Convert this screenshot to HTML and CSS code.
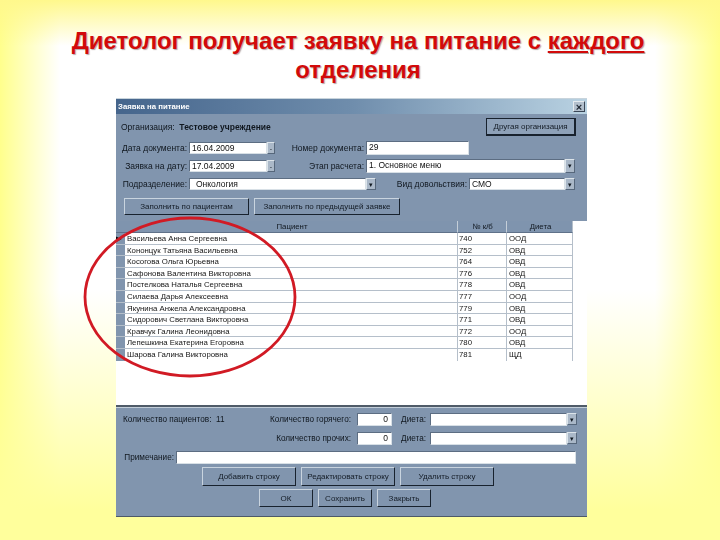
FILE: index.html
```html
<!DOCTYPE html>
<html lang="ru">

<head>
    <meta charset="UTF-8">
    <title>Заявка на питание</title>
    <link rel="stylesheet" href="styles.css">
</head>

<body>
    <h1 class="slideTitle">Диетолог получает заявку на питание с <u>каждого</u><br>отделения</h1>

    <section class="window">
        <div class="titleBar">
            <span>Заявка на питание</span>
            <span class="closeBtn">×</span>
        </div>

        <div class="formTop">
            <div class="orgRow">
                <span class="orgText">Организация: &nbsp;<b>Тестовое учреждение</b></span>
                <button class="btn btnOrg">Другая организация</button>
            </div>

            <div class="formRow rowDate1">
                <label class="lblLeft">Дата документа:</label>
                <span class="field fieldDate">16.04.2009</span><span class="spin">-</span>
                <label class="lblMid">Номер документа:</label>
                <span class="field fieldNum">29</span>
            </div>

            <div class="formRow rowDate2">
                <label class="lblLeft">Заявка на дату:</label>
                <span class="field fieldDate">17.04.2009</span><span class="spin">-</span>
                <label class="lblMid">Этап расчета:</label>
                <span class="field fieldStage">1. Основное меню</span><span class="arrow">▾</span>
            </div>

            <div class="formRow rowDept">
                <label class="lblLeft">Подразделение:</label>
                <span class="field fieldDept">Онкология</span><span class="arrow">▾</span>
                <label class="lblKind">Вид довольствия:</label>
                <span class="field fieldKind">СМО</span><span class="arrow">▾</span>
            </div>

            <div class="fillRow">
                <button class="btn btnFill1">Заполнить по пациентам</button>
                <button class="btn btnFill2">Заполнить по предыдущей заявке</button>
            </div>
        </div>

        <div class="gridBox">
            <div class="gridRow gridHead">
                <span class="rowMark"></span>
                <span class="colName">Пациент</span>
                <span class="colNum">№ к/б</span>
                <span class="colDiet">Диета</span>
            </div>
            <div class="gridRow"><span class="rowMark current">▸</span><span class="colName">Васильева Анна Сергеевна</span><span class="colNum">740</span><span class="colDiet">ООД</span></div>
            <div class="gridRow"><span class="rowMark"></span><span class="colName">Кононцук Татьяна Васильевна</span><span class="colNum">752</span><span class="colDiet">ОВД</span></div>
            <div class="gridRow"><span class="rowMark"></span><span class="colName">Косогова Ольга Юрьевна</span><span class="colNum">764</span><span class="colDiet">ОВД</span></div>
            <div class="gridRow"><span class="rowMark"></span><span class="colName">Сафонова Валентина Викторовна</span><span class="colNum">776</span><span class="colDiet">ОВД</span></div>
            <div class="gridRow"><span class="rowMark"></span><span class="colName">Постелкова Наталья Сергеевна</span><span class="colNum">778</span><span class="colDiet">ОВД</span></div>
            <div class="gridRow"><span class="rowMark"></span><span class="colName">Силаева Дарья Алексеевна</span><span class="colNum">777</span><span class="colDiet">ООД</span></div>
            <div class="gridRow"><span class="rowMark"></span><span class="colName">Якунина Анжела Александровна</span><span class="colNum">779</span><span class="colDiet">ОВД</span></div>
            <div class="gridRow"><span class="rowMark"></span><span class="colName">Сидорович Светлана Викторовна</span><span class="colNum">771</span><span class="colDiet">ОВД</span></div>
            <div class="gridRow"><span class="rowMark"></span><span class="colName">Кравчук Галина Леонидовна</span><span class="colNum">772</span><span class="colDiet">ООД</span></div>
            <div class="gridRow"><span class="rowMark"></span><span class="colName">Лепешкина Екатерина Егоровна</span><span class="colNum">780</span><span class="colDiet">ОВД</span></div>
            <div class="gridRow"><span class="rowMark"></span><span class="colName">Шарова Галина Викторовна</span><span class="colNum">781</span><span class="colDiet">ЩД</span></div>
        </div>

        <div class="formBottom">
            <div class="formRow rowCount">
                <label class="lblTotal">Количество пациентов: &nbsp;11</label>
                <label class="lblCount">Количество горячего:</label>
                <span class="field fieldZero">0</span>
                <label class="lblDiet">Диета:</label>
                <span class="field fieldDiet"></span><span class="arrow">▾</span>
            </div>
            <div class="formRow rowCount">
                <label class="lblTotal"></label>
                <label class="lblCount">Количество прочих:</label>
                <span class="field fieldZero">0</span>
                <label class="lblDiet">Диета:</label>
                <span class="field fieldDiet"></span><span class="arrow">▾</span>
            </div>
            <div class="formRow rowNote">
                <label class="lblNote">Примечание:</label>
                <span class="field fieldNote"></span>
            </div>
            <div class="btnRow rowEdit">
                <button class="btn btnEdit">Добавить строку</button>
                <button class="btn btnEdit">Редактировать строку</button>
                <button class="btn btnEdit">Удалить строку</button>
            </div>
            <div class="btnRow rowSave">
                <button class="btn btnSave">ОК</button>
                <button class="btn btnSave">Сохранить</button>
                <button class="btn btnSave">Закрыть</button>
            </div>
        </div>
    </section>

    <svg class="redOval" viewBox="0 0 230 175" aria-hidden="true">
        <ellipse cx="118" cy="87" rx="105" ry="79"></ellipse>
    </svg>
</body>

</html>
```

FILE: styles.css
```css
* {
    margin: 0;
    padding: 0;
    box-sizing: border-box;
    font-family: "Liberation Sans", Arial, sans-serif;
}

body {
    position: relative;
    width: 720px;
    height: 540px;
    overflow: hidden;
    background:
        linear-gradient(to bottom, #fff88c 0, rgba(255, 255, 150, 0) 46px, rgba(255, 255, 150, 0) 290px, #ffff9c 510px),
        linear-gradient(to right, #ffff8c 0, rgba(255, 255, 150, 0) 60px, rgba(255, 255, 150, 0) 655px, #ffff8c 720px),
        white;
}

.slideTitle {
    height: 98px;
    padding-top: 26px;
    text-align: center;
    margin-left: -4px;
    font-size: 24px;
    line-height: 29px;
    font-weight: bold;
    color: #d20a0a;
    text-shadow: 1px 1px 1px rgba(90, 60, 60, 0.45);
}

.window {
    width: 471px;
    height: 419px;
    margin-left: 116px;
    display: flex;
    flex-direction: column;
    background-color: #8195ae;
    border-bottom: 1px solid #4d5a68;
    font-size: 7.8px;
    color: #10171f;
    filter: blur(0.35px);
}

.titleBar {
    height: 16px;
    padding: 0 2px;
    display: flex;
    justify-content: space-between;
    align-items: center;
    background: linear-gradient(to right, #45658c, #6f8dac 50%, #b9d2e2);
    border-top: 1px solid #c8d4dc;
    color: white;
    font-weight: bold;
}

.closeBtn {
    width: 12px;
    height: 11px;
    line-height: 10px;
    text-align: center;
    font-size: 11px;
    color: #1c2530;
    background-color: #b3c0cd;
    border: 1px solid #3a4656;
    border-top-color: #e6ecf0;
    border-left-color: #e6ecf0;
}

.formTop {
    height: 107px;
    padding: 4px 11px 0 0;
    display: flex;
    flex-direction: column;
    font-size: 8.5px;
}

.orgRow {
    height: 18px;
    margin-bottom: 4px;
    display: flex;
    justify-content: space-between;
    align-items: center;
}

.orgText {
    padding-left: 5px;
}

.formRow {
    display: flex;
    align-items: center;
}

.rowDate1 {
    height: 15px;
    margin-bottom: 3px;
}

.rowDate2 {
    height: 15px;
    margin-bottom: 4px;
}

.rowDept {
    height: 14px;
    margin-bottom: 7px;
}

.lblLeft {
    width: 73px;
    padding-right: 2px;
    text-align: right;
}

.lblMid {
    width: 91px;
    padding-right: 2px;
    text-align: right;
}

.lblKind {
    width: 93px;
    padding-right: 2px;
    text-align: right;
}

.field {
    height: 12px;
    line-height: 11px;
    padding: 0 2px;
    background-color: white;
    color: #111;
    font-size: 8.5px;
    border: 1px solid #5c6d82;
    border-right-color: #d8e0e6;
    border-bottom-color: #d8e0e6;
}

.fieldDate {
    width: 78px;
}

.fieldNum {
    width: 103px;
    height: 14px;
}

.fieldStage {
    width: 199px;
    height: 14px;
}

.fieldDept {
    width: 177px;
    padding-left: 6px;
}

.fieldKind {
    width: 96px;
}

.spin,
.arrow {
    flex-shrink: 0;
    width: 10px;
    height: 12px;
    line-height: 11px;
    text-align: center;
    font-size: 7px;
    color: #10171f;
    background-color: #aab8c8;
    border: 1px solid #56677b;
    border-top-color: #dce4ea;
    border-left-color: #dce4ea;
}

.spin {
    width: 8px;
}

.rowDate2 .arrow {
    height: 14px;
}

.fillRow {
    padding-left: 8px;
    display: flex;
    gap: 5px;
}

.btn {
    height: 18px;
    font-size: 8px;
    color: #141c26;
    background-color: #8195ae;
    border: 1px solid #18222e;
    border-top-color: #c9d4df;
    border-left-color: #c9d4df;
}

.btnOrg {
    width: 90px;
    border-color: #18222e;
    border-width: 1px 2px 2px 1px;
    background-color: #8ea1b8;
}

.btnFill1 {
    width: 125px;
    height: 17px;
}

.btnFill2 {
    width: 146px;
    height: 17px;
}

.gridBox {
    height: 186px;
    background-color: white;
    border-bottom: 2px solid #4f5b68;
    padding-right: 14px;
    color: #161616;
}

.gridRow {
    height: 11.6px;
    display: flex;
    line-height: 11px;
}

.gridRow span {
    display: block;
    border-bottom: 1px solid #b5bfca;
    white-space: nowrap;
    overflow: hidden;
}

.gridRow:last-child span {
    border-bottom: none;
}

.rowMark {
    width: 9px;
    background-color: #8195ae;
    font-size: 11px;
    line-height: 10px;
    color: #000;
}

.colName {
    width: 332px;
    padding-left: 2px;
}

.colNum {
    width: 49px;
    padding-left: 1px;
    border-left: 1px solid #b5bfca;
}

.colDiet {
    width: 67px;
    padding-left: 2px;
    border-left: 1px solid #b5bfca;
    border-right: 1px solid #b5bfca;
}

.gridHead {
    height: 12px;
    line-height: 11px;
}

.gridHead span {
    background-color: #7f94ae;
    color: #10171f;
    text-align: center;
    border-bottom-color: #5f7189;
    border-left-color: #c4ced8;
}

.formBottom {
    flex: 1;
    padding-top: 4px;
    border-top: 1px solid #c3ced9;
    display: flex;
    flex-direction: column;
    font-size: 8.2px;
}

.rowCount {
    height: 14px;
    margin-bottom: 5px;
}

.lblTotal {
    width: 138px;
    padding-left: 7px;
    white-space: nowrap;
}

.lblCount {
    width: 103px;
    text-align: right;
    padding-right: 6px;
    white-space: nowrap;
}

.fieldZero {
    width: 35px;
    text-align: right;
    padding-right: 3px;
    height: 13px;
}

.lblDiet {
    width: 38px;
    padding-right: 4px;
    text-align: right;
}

.fieldDiet {
    width: 137px;
    height: 13px;
}

.rowNote {
    height: 14px;
    margin-bottom: 3px;
}

.lblNote {
    width: 60px;
    text-align: right;
    padding-right: 2px;
}

.fieldNote {
    width: 400px;
    height: 13px;
}

.btnRow {
    display: flex;
}

.rowEdit {
    padding-left: 86px;
    gap: 5px;
    margin-bottom: 3px;
}

.btnEdit {
    width: 94px;
    height: 19px;
}

.rowSave {
    padding-left: 143px;
    gap: 5px;
}

.btnSave {
    width: 54px;
    height: 18px;
}

.redOval {
    position: absolute;
    left: 72px;
    top: 210px;
    width: 230px;
    height: 175px;
}

.redOval ellipse {
    fill: none;
    stroke: #d11a24;
    stroke-width: 2.8;
}
```
